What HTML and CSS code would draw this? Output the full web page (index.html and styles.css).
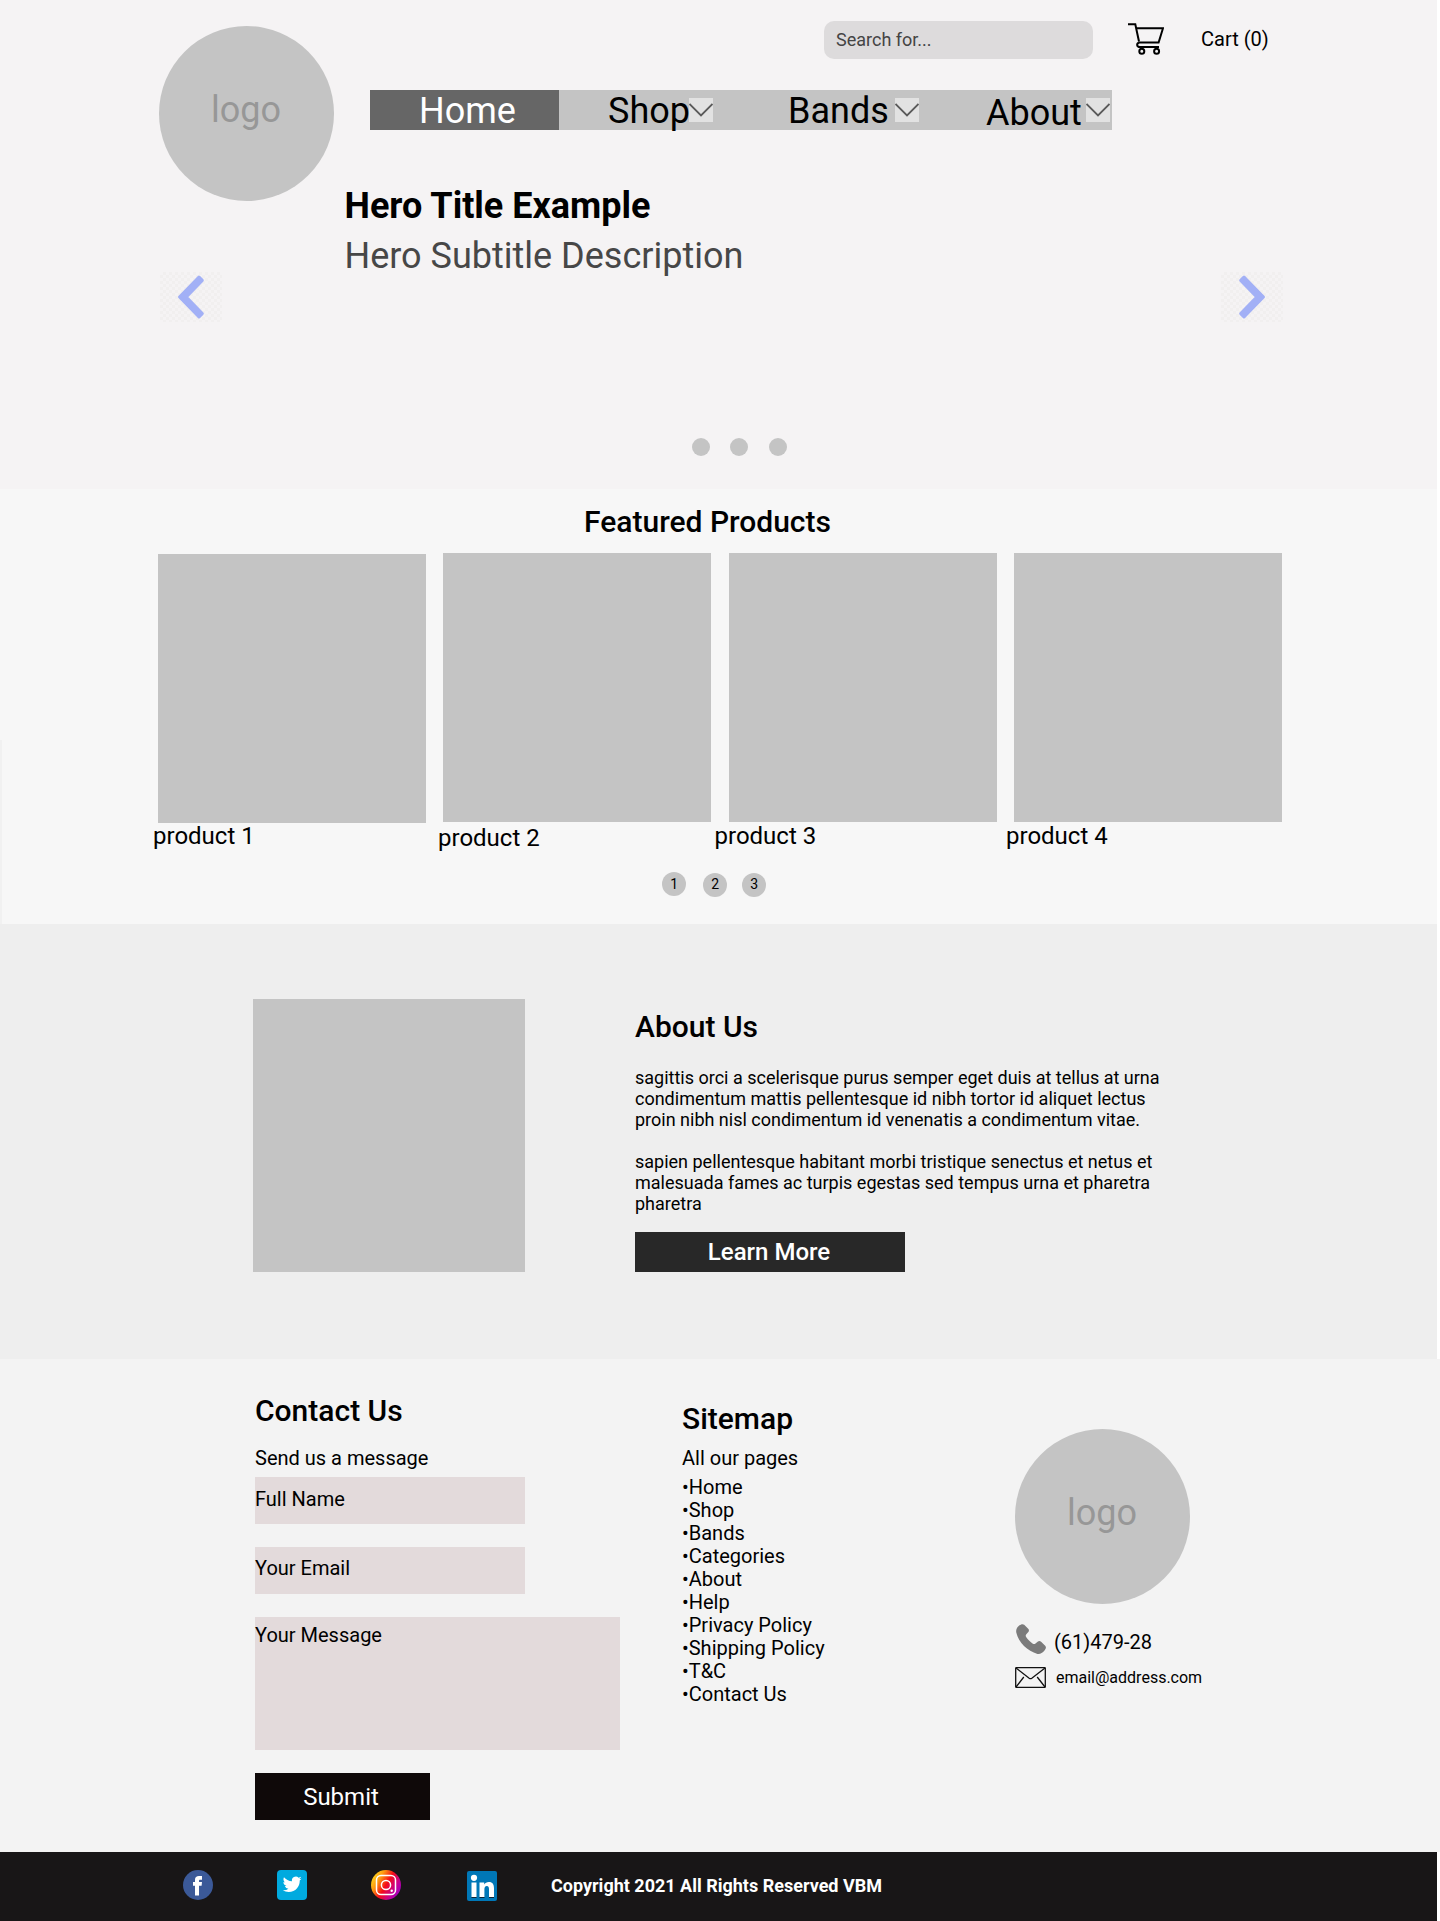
FILE: index.html
```html
<!DOCTYPE html>
<html lang="en">
<head>
<meta charset="utf-8">
<title>VBM</title>
<link rel="stylesheet" href="styles.css">
</head>
<body>
<div class="page">
  <header class="hero">
    <div class="masthead">
      <div class="logo"><span>logo</span></div>
      <div class="masthead-main">
        <div class="utility">
          <div class="search">Search for...</div>
          <svg class="cart-icon" viewBox="0 0 36 32" fill="none" stroke="#000" stroke-width="2">
            <path d="M0 1.2h7.3L11 18.5" /><path d="M8 5.2h27L30.6 19.5H11" /><path d="M11 19.5c-2.6 1-2.6 4.6 1 4.6h19" />
            <circle cx="13.8" cy="28.3" r="2.5"/><circle cx="28.6" cy="28.3" r="2.5"/>
          </svg>
          <a class="cart">Cart (0)</a>
        </div>
        <nav class="nav">
          <a class="nav-item nav-home">Home</a>
          <a class="nav-item nav-shop">Shop</a>
          <svg class="caret" viewBox="0 0 24 24"><path d="M0.5 6 12 17.5 23.5 6"/></svg>
          <a class="nav-item nav-bands">Bands</a>
          <svg class="caret" viewBox="0 0 24 24"><path d="M0.5 6 12 17.5 23.5 6"/></svg>
          <a class="nav-item nav-about">About</a>
          <svg class="caret" viewBox="0 0 24 24"><path d="M0.5 6 12 17.5 23.5 6"/></svg>
        </nav>
        <h1 class="hero-title">Hero Title Example</h1>
        <p class="hero-subtitle">Hero Subtitle Description</p>
      </div>
    </div>
    <div class="arrows">
      <svg class="arrow" viewBox="0 0 62 50"><path d="M19.500 25 39 5l3.300 3.400L26.300 25l16 16.600L39 45z"/></svg>
      <svg class="arrow" viewBox="0 0 62 50"><path d="M42.500 25 23 5l-3.300 3.400L35.700 25l-16 16.600L23 45z"/></svg>
    </div>
    <div class="dots"><i></i><i></i><i></i></div>
  </header>

  <section class="featured">
    <h2 class="heading">Featured Products</h2>
    <div class="products">
      <article class="product product-1"><div class="thumb"></div><p>product 1</p></article>
      <article class="product product-2"><div class="thumb"></div><p>product 2</p></article>
      <article class="product product-3"><div class="thumb"></div><p>product 3</p></article>
      <article class="product product-4"><div class="thumb"></div><p>product 4</p></article>
    </div>
    <div class="pager"><a class="first">1</a><a>2</a><a>3</a></div>
  </section>

  <section class="about">
    <div class="about-image"></div>
    <div class="about-copy">
      <h2 class="heading">About Us</h2>
      <p>sagittis orci a scelerisque purus semper eget duis at tellus at urna<br>condimentum mattis pellentesque id nibh tortor id aliquet lectus<br>proin nibh nisl condimentum id venenatis a condimentum vitae.</p>
      <p>sapien pellentesque habitant morbi tristique senectus et netus et<br>malesuada fames ac turpis egestas sed tempus urna et pharetra<br>pharetra</p>
      <a class="learn-more">Learn More</a>
    </div>
  </section>

  <section class="contact">
    <div class="form">
      <h2 class="heading">Contact Us</h2>
      <p class="lead">Send us a message</p>
      <div class="field field-name">Full Name</div>
      <div class="field field-email">Your Email</div>
      <div class="field field-message">Your Message</div>
      <a class="submit">Submit</a>
    </div>
    <div class="sitemap">
      <h2 class="heading">Sitemap</h2>
      <p class="lead">All our pages</p>
      <ul>
        <li>•Home</li><li>•Shop</li><li>•Bands</li><li>•Categories</li><li>•About</li>
        <li>•Help</li><li>•Privacy Policy</li><li>•Shipping Policy</li><li>•T&amp;C</li><li>•Contact Us</li>
      </ul>
    </div>
    <div class="reach">
      <div class="logo"><span>logo</span></div>
      <div class="phone">
        <svg viewBox="0 0 30 30" width="30" height="30"><path fill="#7b7b7b" d="M3.200 1.600C5 .1 6.800-.4 8.200.8l4 4c1.100 1.300.9 2.300-.1 3.500l-1.800 2c-.9 1-.7 1.900 0 3 1.600 2.400 3.700 4.500 6.200 6.200 1.100.7 2.100.8 3 0l2.100-1.800c1.300-1.100 2.300-1.100 3.500 0l4.100 4c1.200 1.400.9 2.900-.5 4.600C26.200 29.400 24 30.300 21.500 29.900 11.500 27.500 2.600 18.400.3 8.600-.2 5.700.9 3.400 3.200 1.600Z"/></svg>
        <span>(61)479-28</span>
      </div>
      <div class="email">
        <svg viewBox="0 0 31 21" width="31" height="21" fill="none" stroke="#111" stroke-width="1.300"><rect x=".7" y=".7" width="29.600" height="19.600" rx=".6"/><path d="M1 1l13.200 10.200q1.300.9 2.600 0L30 1M1 20l7.800-10M30 20 22.200 10"/></svg>
        <span>email@address.com</span>
      </div>
    </div>
  </section>

  <footer class="footer">
    <svg class="social" viewBox="0 0 30 30"><circle cx="15" cy="15" r="15" fill="#3b5998"/><path fill="#fff" d="M12 25.500V15.800H10v-3.700h2V9.800C12 7.200 13.500 6 16 6h3v3.700h-1.900c-.8 0-1.100.5-1.100 1.200v1.200h3l-.4 3.700H16v9.700z"/></svg>
    <svg class="social" viewBox="0 0 30 30"><rect width="30" height="30" rx="4" fill="#00aadf"/><path fill="#fff" transform="translate(5.700 4.800) scale(.79)" d="M23.950 4.570a10 10 0 0 1-2.820.77 4.960 4.960 0 0 0 2.160-2.720c-.95.550-2 .950-3.130 1.180a4.920 4.920 0 0 0-8.380 4.480C7.690 8.090 4.070 6.130 1.640 3.160a4.820 4.820 0 0 0-.67 2.480c0 1.710.87 3.210 2.190 4.100a4.900 4.900 0 0 1-2.230-.62v.06a4.920 4.920 0 0 0 3.950 4.830 5 5 0 0 1-2.210.08 4.940 4.940 0 0 0 4.600 3.420A9.870 9.870 0 0 1 0 19.540a14 14 0 0 0 7.550 2.210c9.050 0 14-7.500 14-13.980 0-.21 0-.42-.02-.63a9.940 9.940 0 0 0 2.420-2.570z"/></svg>
    <svg class="social" viewBox="0 0 30 30"><defs><linearGradient id="ig" x1="0" y1=".2" x2="1" y2=".8"><stop offset="0" stop-color="#ffe020"/><stop offset=".25" stop-color="#ff9a10"/><stop offset=".5" stop-color="#f50c18"/><stop offset=".78" stop-color="#c4009a"/><stop offset="1" stop-color="#9000c8"/></linearGradient></defs><circle cx="15" cy="15" r="15" fill="url(#ig)"/><g fill="none" stroke="#fff" stroke-width="1.500"><rect x="5.500" y="5.500" width="19" height="19" rx="4.500"/><circle cx="15" cy="15" r="4.600"/></g><circle cx="20.700" cy="20.700" r="1.200" fill="#fff"/></svg>
    <svg class="social linkedin" viewBox="0 0 30 30"><rect width="30" height="30" rx="2" fill="#0077b7"/><path fill="#123" d="M4.500 26h5v1h-5zM12.500 26h5v1h-5zM22 26h5v1h-5z"/><g fill="#fff"><circle cx="7" cy="6.800" r="3.100"/><path d="M4.500 11.500h5V26h-5zM12.500 11.500h4.700v2c.9-1.500 2.500-2.400 4.600-2.400 4 0 5.200 2.500 5.200 6.500V26h-5v-7.500c0-2-.4-3.400-2.200-3.400-1.700 0-2.400 1.300-2.400 3.300V26h-4.900z"/></g></svg>
    <p>Copyright 2021 All Rights Reserved VBM</p>
  </footer>
</div>
</body>
</html>
```
FILE: styles.css
```css
* { box-sizing: border-box; margin: 0; padding: 0; }
body { background: #fff; font-family: Roboto, "Liberation Sans", sans-serif; color: #000; }
.page { width: 1437px; }
svg { display: block; flex: none; }

.logo { width: 175px; height: 175px; border-radius: 50%; background: #c4c4c4; color: #979797; font-size: 36px; line-height: 42px; text-align: center; padding: 63px 1px 0 0; flex: none; }

.hero { height: 489px; background: #f5f3f4; }
.masthead { display: flex; height: 272px; padding-left: 159px; }
.masthead > .logo { margin-top: 26px; }
.masthead-main { flex: 1; }
.utility { display: flex; align-items: flex-start; height: 90px; padding: 21px 0 0 490px; }
.search { width: 269px; height: 38px; border-radius: 10px; background: #dddbdc; color: #444; font-size: 18px; line-height: 21px; padding: 8px 12px; }
.cart-icon { width: 36px; height: 32px; margin: 2px 0 0 34.500px; }
.cart { font-size: 20px; line-height: 23px; margin: 7px 0 0 37.500px; }

.nav { display: flex; align-items: flex-start; width: 741.500px; height: 40px; margin-left: 36px; background: #c4c4c4; font-size: 36px; line-height: 42px; }
.nav-home { width: 189px; height: 40px; padding-left: 49px; background: #666; color: #fff; }
.nav-shop { width: 130px; padding-left: 49px; }
.nav-bands { width: 182px; padding-left: 75px; }
.nav-about { width: 167px; padding: 2px 0 0 67px; }
.caret { width: 24px; height: 24px; margin-top: 8px; background: #e2e2e2; fill: none; stroke: #5a5a5a; stroke-width: 1.8; }

.hero-title { margin: 55px 0 0 10.500px; font-size: 36px; line-height: 42px; font-weight: 700; }
.hero-subtitle { margin: 8px 0 0 10.500px; font-size: 36px; line-height: 42px; color: #474747; }

.arrows { display: flex; justify-content: space-between; padding: 0 154px 0 159.500px; }
.arrow { width: 62px; height: 50px; fill: #a2b0f6; stroke: #a2b0f6; stroke-width: 3; stroke-linejoin: round; background: repeating-conic-gradient(#f1efef 0 25%, #f5f3f4 0 50%) 0 0 / 6px 6px; }
.dots { display: flex; gap: 20.7px; padding: 116px 0 0 691.800px; }
.dots i { width: 18px; height: 18px; border-radius: 50%; background: #c4c4c4; }

.heading { font-size: 30px; line-height: 35px; font-weight: 500; }

.featured { height: 435px; background: linear-gradient(#f1f1f1, #f1f1f1) 0 100% / 2px 184px no-repeat #f7f7f7; padding-top: 15px; }
.featured .heading { padding-left: 584px; }
.products { display: grid; grid-template-columns: 285px 286px 285px 268px; height: 319px; padding: 14px 0 0 158px; }
.product p { font-size: 24px; line-height: 28px; }
.thumb { width: 268px; height: 269px; background: #c4c4c4; }
.product-1 { padding-top: 1px; }
.product-1 p { margin-left: -5px; margin-top: -1px; }
.product-2 p { margin: 2px 0 0 -5px; }
.product-3 p { margin-left: -14.500px; }
.product-4 p { margin-left: -8px; }
.pager { display: flex; padding: 15px 0 0 662.300px; font-size: 14px; }
.pager a { width: 24px; height: 24px; margin-right: 15px; border-radius: 50%; background: #c4c4c4; line-height: 22px; text-align: center; }
.pager .first { margin-top: -1px; margin-right: 17px; line-height: 24px; }

.about { display: flex; height: 435px; background: #eee; padding: 75px 0 0 253px; }
.about-image { width: 272.300px; height: 273px; background: #c4c4c4; }
.about-copy { margin-left: 109.700px; padding-top: 10px; }
.about-copy .heading { margin-bottom: 23px; }
.about-copy p { font-size: 18px; line-height: 21px; margin-bottom: 21px; }
.learn-more { display: block; width: 270px; height: 40px; margin-top: -3px; padding: 6px 2px 0 0; background: #282828; color: #fff; font-size: 24px; line-height: 28px; font-weight: 500; text-align: center; }

.contact { display: flex; width: 1440px; height: 493px; background: #f3f3f3; padding-left: 255px; font-size: 20px; line-height: 23px; }
.form { width: 427px; padding-top: 34px; }
.form .lead { margin: 19px 0 7px; }
.field { width: 270px; height: 47px; margin-bottom: 23px; background: #e3dadb; }
.field-name { padding-top: 11px; }
.field-email { padding-top: 10px; }
.field-message { width: 365px; height: 133px; padding-top: 7px; }
.submit { display: block; width: 175px; height: 47px; padding: 10px 3px 0 0; background: #0f0909; color: #fff; font-size: 24px; line-height: 28px; text-align: center; }
.sitemap { width: 333px; padding-top: 42px; }
.sitemap .lead { margin: 11px 0 6px; }
.sitemap ul { list-style: none; }
.reach { padding-top: 70px; }
.phone { display: flex; gap: 8px; margin: 20px 0 0 1px; }
.phone span { padding-top: 7px; }
.email { display: flex; gap: 10px; margin-top: 13px; font-size: 16px; line-height: 19px; }
.email span { padding-top: 1px; }

.footer { display: flex; height: 69px; background: #181617; padding: 18px 0 0 183px; color: #fff; }
.social { width: 30px; height: 30px; margin-right: 64px; }
.linkedin { margin: 1px 54px 0 2px; }
.footer p { font-size: 18px; line-height: 21px; font-weight: 700; padding-top: 5px; }
```
